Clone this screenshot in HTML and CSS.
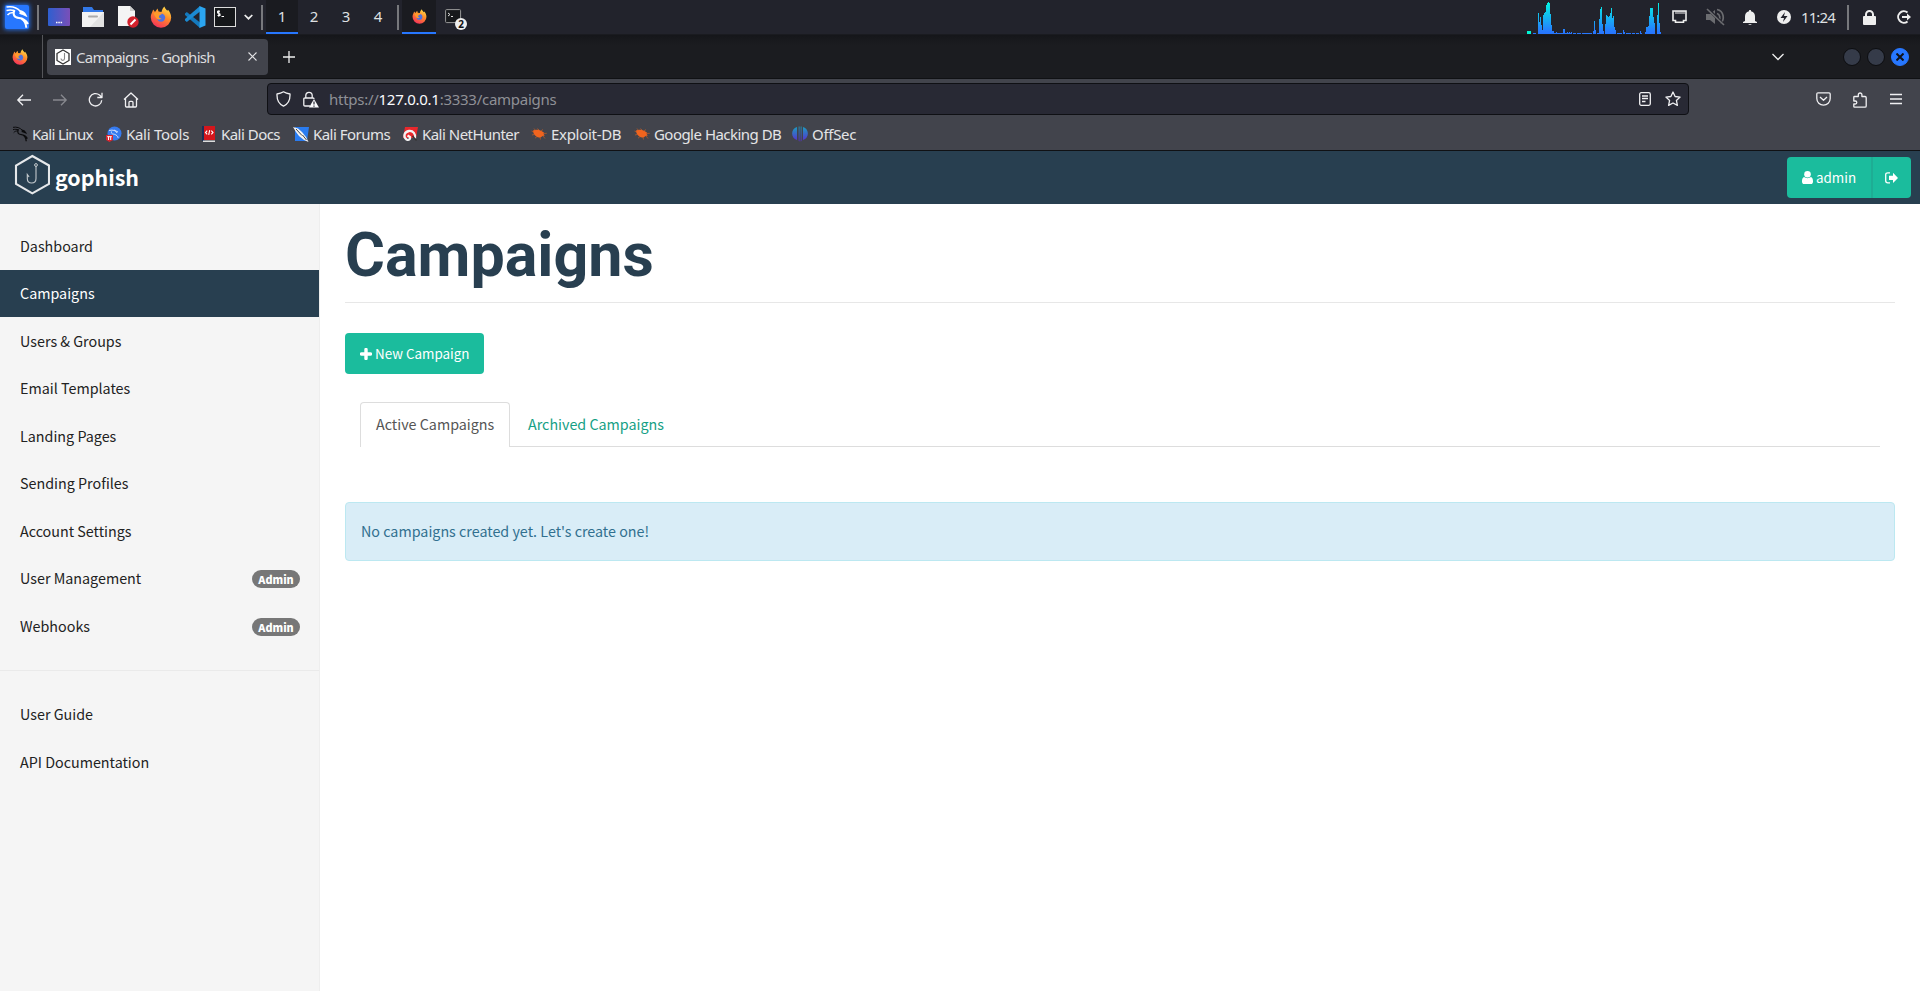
FILE: index.html
```html
<!DOCTYPE html>
<html lang="en">
<head>
<meta charset="utf-8">
<title>Campaigns - Gophish</title>
<link rel="stylesheet" href="styles.css">
</head>
<body>
<svg class="defs" width="0" height="0" aria-hidden="true">
  <defs>
    <linearGradient id="fox" x1="0.8" y1="0" x2="0.3" y2="1"><stop offset="0" stop-color="#ffe14a"/><stop offset=".45" stop-color="#ff8a2a"/><stop offset="1" stop-color="#f5305c"/></linearGradient>
    <linearGradient id="desk" x1="0" y1="0" x2="1" y2="0"><stop offset="0" stop-color="#2e5fd0"/><stop offset="1" stop-color="#7a4fb8"/></linearGradient>
    <linearGradient id="load" x1="0" y1="0" x2="0" y2="32" gradientUnits="userSpaceOnUse"><stop offset="0" stop-color="#00ffe0"/><stop offset="1" stop-color="#2777ff"/></linearGradient>
    <linearGradient id="off" x1="0" y1="0" x2="0" y2="1"><stop offset="0" stop-color="#1a9fc0"/><stop offset="1" stop-color="#5a2bd0"/></linearGradient>
    <symbol id="firefox" viewBox="0 0 22 22">
      <path fill="url(#fox)" d="M2 6.500 3.200 3.500 5 6l2.500-3.500 1 3 3 .5C12 3.500 13 1.800 14.500 .5c.3 2 1.600 2.800 2.800 4.200l.7-1c1.700 2 3.200 4.600 3.200 7.800A10.200 10.200 0 0 1 .8 11.500C.8 9.500 1.200 8 2 6.500z"/>
      <circle cx="11" cy="11.600" r="4.200" fill="#4f72e0"/>
      <path fill="#ff9b2b" d="M3.500 7.500c2-1.500 4-1.500 5.500-.5l3 .3c-.3 1.500-2.500 1.700-3 2.700-.5 1.500.5 2.500 2.500 2.500-2 1.600-5 1-6-1.500z"/>
    </symbol>
    <symbol id="dragon" viewBox="0 0 24 24">
      <path fill="none" stroke="currentColor" stroke-width="1.500" d="M1.500 2C7 1 12 2.500 15.500 6.500M1.500 5.500c3-.8 5.500-.6 8 .2M2.500 10C4.500 7.500 6.500 7.300 9 7.500"/>
      <path fill="none" stroke="currentColor" stroke-width="2" d="M9.500 5C7.500 9.500 9 12.500 14 13c4.500.4 7 2.500 9 6M16.500 13.800c3.800 1.800 4.500 4.800 4.800 9M14.500 6.200c3-.2 4.700 1.300 6 4l-3.500-1.500-2.500-.8"/>
    </symbol>
    <symbol id="bug" viewBox="0 0 16 16">
      <path fill="#f0641e" d="M2 4.500c2.500-1.300 6-1 8.500.5l2.700 1.800-.7 1 1.200 1.800-2.200.3C9.500 12 7 11.800 5.500 10.500 3.500 9.500 2.200 7.500 2 4.500z"/>
      <path stroke="#d8621f" stroke-width=".6" fill="none" d="M3 6 .5 5M4.500 4.500 3 2.500M8 4 6.500 2.500M10 5l2-1.500M13 7.500l2.800-.2M12 10l2 2.500M9 11l.5 2.500M6 10.500l-2 1.700M3 8.500l-2 .5"/>
    </symbol>
  </defs>
</svg>

<header class="panel">
  <div class="panel-left">
    <span class="kali"><svg width="24" height="24"><use href="#dragon"/></svg></span>
    <i class="sep sep-a"></i>
    <svg class="app desk-app" width="22" height="18" viewBox="0 0 22 18"><rect width="22" height="18" rx="1" fill="url(#desk)"/><path stroke="#fff" stroke-width="1.500" d="M8 14.500h1.500M10.300 14.500h1.500M12.600 14.500h1.500"/></svg>
    <svg class="app folder-app" width="22" height="20" viewBox="0 0 22 20"><path fill="#3278e8" d="M1 0h9l2 3h9v4H1z"/><path fill="#f2f2f2" d="M0 5h22v15H0z"/><path fill="#e2e2e2" d="M22 5v15H8z"/><path stroke="#aaa" stroke-width="2" stroke-linecap="round" d="M7 9.500h8"/></svg>
    <svg class="app doc-app" width="21" height="22" viewBox="0 0 21 22"><path fill="#f4f4f4" d="M0 0h12l5 5v15H0z"/><path fill="#ccc" d="M12 0v5h5z"/><circle cx="15" cy="16" r="5.700" fill="#d3212c"/><path stroke="#fff" stroke-width="2" d="m12.500 18.500 5-5"/></svg>
    <svg class="app fox-app" width="22" height="22"><use href="#firefox"/></svg>
    <svg class="app code-app" width="22" height="22" viewBox="0 0 22 22"><path fill="#1479bd" d="M1 7.500 2.800 6 16 16.500V22L1 9z"/><path fill="#1b8ad2" d="M1 14.500 2.800 16 16 5.500V0L1 13z"/><path fill="#2ba5f0" d="m15.500 0 6 2.500v17l-6 2.500z"/></svg>
    <svg class="app term-app" width="22" height="20" viewBox="0 0 22 20"><rect x=".5" y=".5" width="21" height="19" fill="#15171a" stroke="#dcdcdc"/><path fill="none" stroke="#fff" stroke-width="1.100" d="M6 4.300H3.600v1.500L6 7v1.500H3.500M4.800 3.200v6.500M7.500 9.500H10"/></svg>
    <svg class="app arrow-app" width="9" height="6" viewBox="0 0 9 6"><path fill="none" stroke="#eee" stroke-width="1.700" d="m.7 1 3.800 3.700L8.300 1"/></svg>
    <i class="sep sep-b"></i>
    <span class="ws ws-on">1</span><span class="ws">2</span><span class="ws">3</span><span class="ws">4</span>
    <i class="sep sep-c"></i>
    <span class="task"><svg width="15" height="15"><use href="#firefox"/></svg></span>
    <svg class="task-term" width="23" height="22" viewBox="0 0 23 22"><rect x=".6" y=".6" width="15" height="13" rx="1" fill="#17191c" stroke="#999"/><path fill="none" stroke="#ddd" d="m3 4 2 1.500L3 7M6 7.500h2"/><circle cx="16" cy="15" r="6" fill="#eee"/><text x="16" y="18.600" text-anchor="middle" class="count">2</text></svg>
  </div>
  <div class="panel-right">
    <svg class="graph" width="134" height="34" viewBox="0 0 134 34"><path fill="#00f5d4" d="M0 31h4v3H0z"/><path fill="url(#load)" d="M6 33h2v1H6zM9 33V34H8V33zM11 34V13h1v9h1v-5h1v8h1v5h1v-15h1v-2h1v-1h1V5h1V3h1V2h1v1h1v11h1v11h1v6h1v3zM26 31h1v3h-1zM27 33h2v-1h1v1h6v-4h2v4h2v-1h1v1h1v-1h1v1h1v1H27zM44 32h1v2h-1zM46 33h3v1h-3zM50 33h4v1h-4zM55 33h10v1H55zM66 34v-3h1V21h1v9h1v4zM70 33h2V19h1V9h1V7h1v17h1v7h1v3h-7zM78 34V24h1v-9h1v1h1v1h1v-1h1v-3h1v-5h1v10h1v-2h1v11h1v3h1v5zM90 33h5v1h-5zM96 30h1v2h1v2h-2zM99 33h5v1h-5zM105 33h3v1h-3zM109 33h3v1h-3zM113 31h1v2h1v1h-2zM118 34v-2h1v-5h2v-1h1V16h1V8h3v9h1v6h1v11zM130 34V15h1V3h1v20h1v9h1v2z"/></svg>
    <svg class="r-eth" width="15" height="14" viewBox="0 0 15 14"><path fill="none" stroke="#eee" stroke-width="1.600" d="M1 1h13v9.500h-2.500v1.700h-8v-1.700H1z"/><path stroke="#eee" d="M4 1v3M6 1v3M8 1v3M10 1v3M12 1v3"/></svg>
    <svg class="r-vol" width="19" height="18" viewBox="0 0 19 18"><path fill="#6b6c70" d="M0 6h4l5-4v14l-5-4H0z"/><path fill="none" stroke="#6b6c70" stroke-width="1.700" d="M11 1.500c7 1.500 8 10 3.500 14M11 5.500c3 1 3.500 4.500 2 7"/><path stroke="#22232c" stroke-width="3" d="m1 0 18 18"/><path stroke="#6b6c70" stroke-width="1.700" d="m1 1 17 16"/></svg>
    <svg class="r-bell" width="14" height="15" viewBox="0 0 14 15"><path fill="#eee" d="M7 0c1 0 1 .5 1 1.200 3 .7 4 2.800 4 5.300V11l2 1v1H0v-1l2-1V6.500C2 4 3 1.900 6 1.200 6 .5 6 0 7 0zM5 14h4l-2 1z"/></svg>
    <svg class="r-pow" width="14" height="14" viewBox="0 0 14 14"><circle cx="7" cy="7" r="7" fill="#eee"/><path fill="#22232c" d="M8 2 3.500 8H7l-1 4 4.500-6H7z"/></svg>
    <span class="clock">11:24</span>
    <i class="sep sep-d"></i>
    <svg class="r-lock" width="13" height="15" viewBox="0 0 13 15"><rect y="6" width="13" height="9" rx="1" fill="#eee"/><path fill="none" stroke="#eee" stroke-width="2" d="M3 7V4.500a3.500 3.500 0 0 1 7 0V7"/></svg>
    <svg class="r-out" width="14" height="14" viewBox="0 0 14 14"><path fill="none" stroke="#eee" stroke-width="2" d="M10.500 2.600a5.700 5.700 0 1 0 0 8.800"/><path fill="#eee" d="M5 6h5V3.500L14 7l-4 3.500V8H5z"/></svg>
  </div>
</header>

<div class="tabstrip">
  <span class="view"><svg width="16" height="16"><use href="#firefox"/></svg></span>
  <div class="tab">
    <svg width="16" height="16" viewBox="0 0 16 16"><path fill="#fff" d="M0 0h16v16H0z"/><path fill="none" stroke="#333" stroke-width="1.300" d="m8 1 6 3.500v7L8 15l-6-3.500v-7z"/><path fill="none" stroke="#888" stroke-width="1.100" d="M9.500 4v5.500c0 2.500-3.500 2.500-3.500 0"/></svg>
    <span class="tab-title">Campaigns - Gophish</span>
    <svg class="tab-x" width="9" height="9" viewBox="0 0 9 9"><path stroke="#e4e4e6" stroke-width="1.100" d="m.5.5 8 8m0-8-8 8"/></svg>
  </div>
  <svg class="plus" width="12" height="12" viewBox="0 0 12 12"><path stroke="#eee" stroke-width="1.300" d="M6 0v12M0 6h12"/></svg>
  <svg class="all-tabs" width="12" height="8" viewBox="0 0 12 8"><path fill="none" stroke="#eee" stroke-width="1.300" d="m.5 1 5.500 5.500L11.500 1"/></svg>
  <i class="dot"></i><i class="dot"></i>
  <i class="dot dot-x"><svg width="8" height="8" viewBox="0 0 8 8"><path stroke="#101218" stroke-width="2" d="m.5.500 7 7m0-7-7 7"/></svg></i>
</div>

<div class="toolbar">
  <svg class="t-back" width="14" height="12" viewBox="0 0 14 12"><path class="ln" d="M14 6H1M6 .7.8 6 6 11.300"/></svg>
  <svg class="t-fwd" width="14" height="12" viewBox="0 0 14 12"><path class="ln" d="M0 6h13M8 .7 13.200 6 8 11.300"/></svg>
  <svg class="t-load" width="15" height="15" viewBox="0 0 15 15"><path class="ln" d="M13.700 8.200A6.200 6.200 0 1 1 11.500 3l2 2M14 .8v4.700H9.300"/></svg>
  <svg class="t-home" width="16" height="16" viewBox="0 0 16 16"><path class="ln" d="M1 7.500 8 1l7 6.500M2.500 6.500V14c0 .7.300 1 1 1h9c.7 0 1-.3 1-1V6.500M6 15v-4.500c0-1 .3-1.200 1-1.200h2c.7 0 1 .2 1 1.200V15"/></svg>
  <div class="url">
    <svg class="u-shield" width="15" height="16" viewBox="0 0 15 16"><path class="ln" d="M7.500.8c2 1.300 4 1.900 6.500 2.200.3 6-1.500 10-6.500 12.200C2.500 13 .7 9 1 3 3.500 2.700 5.500 2.100 7.500.8z"/></svg>
    <svg class="u-lock" width="16" height="17" viewBox="0 0 16 17"><path class="ln" d="M7 15H2c-.8 0-1.200-.4-1.200-1.200V8.200C.8 7.400 1.200 7 2 7h8c.8 0 1 .4 1 1M2.800 7V4.500a3.200 3.200 0 0 1 6.400 0V7"/><path fill="#fbfbfe" d="m11 8 5 8.500H6z"/><path stroke="#282934" stroke-width="1.200" d="M11 10.500v3M11 14.500v1.200"/></svg>
    <span class="address">https://<b>127.0.0.1</b>:3333/campaigns</span>
    <svg class="u-read" width="12" height="14" viewBox="0 0 12 14"><rect class="ln" x=".7" y=".7" width="10.600" height="12.600" rx="1.500"/><path class="ln" d="M3 4h6M3 6.500h6M3 9.500h3.500"/></svg>
    <svg class="u-star" width="16" height="16" viewBox="0 0 16 16"><path class="ln" d="m8 1 2.100 4.500 5 .6-3.700 3.300 1 5L8 12l-4.400 2.400 1-5L.9 6.100l5-.6z"/></svg>
  </div>
  <svg class="t-pocket" width="15" height="14" viewBox="0 0 15 14"><path class="ln" d="M2 .8h11c.8 0 1.200.4 1.200 1.200v4.500a6.700 6.700 0 0 1-13.400 0V2C.8 1.200 1.200.8 2 .8zM4 5l3.500 3.300L11 5"/></svg>
  <svg class="t-ext" width="14" height="16" viewBox="0 0 14 16"><path class="ln" d="M.8 9V5.200c0-.5.300-.7.700-.7h3.800V2.800a1.800 1.800 0 0 1 3.600 0v1.700H12c.8 0 1.200.4 1.200 1.200V14c0 .8-.4 1.200-1.200 1.200H1.500c-.5 0-.7-.2-.7-.7V12h1.500a1.500 1.500 0 0 0 0-3z"/></svg>
  <svg class="t-menu" width="12" height="12" viewBox="0 0 12 12"><path class="ln" d="M0 1.500h12M0 6h12M0 10.500h12"/></svg>
</div>

<nav class="bookmarks">
  <span class="tight"><svg class="black" width="16" height="16"><use href="#dragon"/></svg><em>Kali Linux</em></span>
  <span class="loose"><svg width="16" height="16" viewBox="0 0 16 16"><circle cx="8.500" cy="7.500" r="7" fill="#367bf0"/><path fill="none" stroke="#dbe8ff" stroke-width=".9" d="M3 4.500c4-1 7 0 8 2.500M5.500 5.500C5 9 8 7.500 10 9s2 2 2 3M8 4l4 2"/><path fill="#d9262f" d="M0 9h7v5l-3.500 2L0 14z"/><path stroke="#fff" stroke-width="1" d="M1.300 10.700h4.500M2.500 10.700V14M4.700 10.700V14"/></svg><em>Kali Tools</em></span>
  <span><svg width="16" height="16" viewBox="0 0 16 16"><path fill="#1c2f58" d="M1 0h3v15H1z"/><path fill="#d4161c" d="M3 0h11v14H3z"/><path fill="#ddd" d="M2 14.500h12V16H2z"/><path fill="none" stroke="#fff" stroke-width="1.100" d="M6.200 4.700 4.500 6.500l1.700 1.800M10.300 4.700 12 6.500l-1.700 1.800M8.700 4.200l-1 4.600"/></svg><em>Kali Docs</em></span>
  <span><svg width="16" height="16" viewBox="0 0 16 16"><path fill="#2a7cf0" d="M2 1h14l-2 14H2z"/><path fill="#f2f2f2" d="m0 1 5 1.500 4 3.500 4 5 2.500 5-4.500-2-5-4-3-4z"/><path stroke="#333" stroke-width=".9" d="m3 3 6 6.500M9.500 9l4 5"/></svg><em>Kali Forums</em></span>
  <span><svg width="16" height="16" viewBox="0 0 16 16"><path fill="#e8282c" d="M3 1h13l-2 11H1z"/><path fill="none" stroke="#f3f3f3" stroke-width="2.300" d="M13 12.500C14 8 11 4.500 7 5 2 5.700 1 11 4.500 13.500c2.500 1.200 4-.5 3.500-2.500L5.500 9.500"/><path stroke="#333" stroke-width="1.300" d="m10.500 10 4 4.500"/></svg><em>Kali NetHunter</em></span>
  <span class="loose"><svg width="16" height="16"><use href="#bug"/></svg><em>Exploit-DB</em></span>
  <span><svg width="16" height="16"><use href="#bug"/></svg><em>Google Hacking DB</em></span>
  <span class="loose"><svg width="16" height="16" viewBox="0 0 16 16"><path fill="url(#off)" d="M5 1v13C-1.500 12-1.500 3 5 1zM6.700.5H7.500v15l-.8-.5zM8.700.5h.8V15l-.8.5zM11 1c6.500 2 6.500 11 0 13z"/></svg><em>OffSec</em></span>
</nav>

<div class="navbar">
  <div class="brand">
    <svg width="36" height="41" viewBox="0 0 36 41"><path fill="none" stroke="#e6e8ea" stroke-width="2.100" d="m18.300 2 16.700 9.500v18.300l-16.700 9.500L2 29.800V11.500z"/><path fill="none" stroke="#c3c9cd" stroke-width="1.100" d="M22 12v12.500c0 6-8.700 6-8.700 0v-4l1.800 2.500"/><circle cx="22" cy="11" r="1.400" fill="none" stroke="#c3c9cd"/></svg>
    <span>gophish</span>
  </div>
  <div class="user">
    <button class="who"><svg width="11" height="13" viewBox="0 0 11 13"><circle cx="5.500" cy="3.300" r="3.300" fill="#fff"/><path fill="#fff" d="M2 6c2 1.500 5 1.500 7 0 1.700.5 2 2.500 2 4.500S10 13 9 13H2c-1 0-2-.5-2-2.500S.300 6.500 2 6z"/></svg><span>admin</span></button>
    <button class="leave"><svg width="13" height="12" viewBox="0 0 13 12"><path fill="none" stroke="#fff" stroke-width="1.300" d="M5 .8H2.800C1.500.8.7 1.500.7 2.800v6c0 1.300.8 2 2.100 2H5"/><path fill="#fff" d="M4 3.800h4V.8L13 6l-5 5V8H4z"/></svg></button>
  </div>
</div>

<div class="page">
  <aside class="sidebar">
    <a>Dashboard</a>
    <a class="on">Campaigns</a>
    <a>Users &amp; Groups</a>
    <a>Email Templates</a>
    <a>Landing Pages</a>
    <a>Sending Profiles</a>
    <a>Account Settings</a>
    <a>User Management<span class="badge">Admin</span></a>
    <a>Webhooks<span class="badge">Admin</span></a>
    <hr>
    <a>User Guide</a>
    <a>API Documentation</a>
  </aside>
  <main class="main">
    <h1>Campaigns</h1>
    <button class="new"><svg width="12" height="12" viewBox="0 0 12 12"><path stroke="#fff" stroke-width="3.400" stroke-linecap="round" d="M6 1.500v9M1.500 6h9"/></svg><span>New Campaign</span></button>
    <div class="tabs"><a class="current">Active Campaigns</a><a>Archived Campaigns</a></div>
    <div class="alert">No campaigns created yet. Let's create one!</div>
  </main>
</div>
</body>
</html>
```
FILE: styles.css
```css
* { box-sizing: border-box; }
body {
  margin: 0;
  height: 991px;
  overflow: hidden;
  display: flex;
  flex-direction: column;
  background: #fff;
  font-family: "Noto Sans CJK SC", sans-serif;
}
svg { display: block; flex: none; }
.defs { position: absolute; }
button { border: 0; font: inherit; color: inherit; }

/* desktop panel */
.panel {
  height: 35px;
  flex: none;
  display: flex;
  justify-content: space-between;
  background: #22232c;
  border-bottom: 1px solid #1a1b20;
  font-family: "Noto Sans", sans-serif;
  font-size: 15px;
  color: #dfe0e2;
}
.panel-left, .panel-right { display: flex; align-items: center; }
.kali {
  width: 24px; height: 24px;
  margin-left: 5px;
  background: #2777ff;
  color: #fff;
  border-radius: 2px;
  box-shadow: 0 0 4px 1px #2469d8;
}
.sep { width: 2px; height: 25px; background: #77787c; }
.sep-a { margin-left: 8px; }
.desk-app { margin-left: 9px; }
.folder-app { margin-left: 12px; }
.doc-app { margin-left: 14px; }
.fox-app { margin-left: 11px; }
.code-app { margin-left: 12px; }
.term-app { margin-left: 8px; }
.arrow-app { margin-left: 8px; }
.sep-b { margin-left: 8px; }
.ws { width: 32px; height: 34px; line-height: 33px; text-align: center; }
.ws-on { background: #1a1b20; border-bottom: 2px solid #2777ff; }
.sep-b + .ws { margin-left: 3px; }
.sep-c { margin-left: 3px; }
.task {
  width: 34px; height: 34px;
  margin-left: 3px;
  display: flex; align-items: center; justify-content: center;
  background: #1a1b20;
  border-bottom: 2px solid #2777ff;
}
.task-term { margin: 6px 0 0 9px; }
.count { font: bold 10px "Noto Sans", sans-serif; fill: #111; }
.graph { align-self: flex-start; margin-right: 11px; }
.r-eth { margin-right: 19px; }
.r-vol { margin-right: 18px; }
.r-bell { margin-right: 20px; }
.r-pow { margin-right: 10px; }
.clock { width: 46px; font-size: 15px; line-height: 20px; padding-bottom: 1px; letter-spacing: -.9px; }
.r-lock { margin: 0 21px 0 14px; }
.r-out { margin-right: 9px; }

/* browser chrome */
.tabstrip {
  height: 44px;
  flex: none;
  display: flex;
  align-items: center;
  background: linear-gradient(#15161a, #1b1c20 10px);
  border-bottom: 1px solid #101114;
  font-family: "Noto Sans", sans-serif;
}
.view { width: 43px; height: 43px; padding: 14px 0 0 12px; border-right: 1px solid #55565a; }
.tab {
  width: 221px; height: 36px;
  margin-left: 4px;
  padding: 0 11px 0 8px;
  display: flex; align-items: center;
  background: #42444c;
  border-radius: 4px;
}
.tab-title { margin-left: 5px; font-size: 15px; letter-spacing: -.75px; word-spacing: 1.2px; color: #dcdcde; white-space: nowrap; }
.tab-x { margin-left: auto; }
.plus { margin-left: 15px; }
.all-tabs { margin-left: auto; margin-right: 59px; }
.dot { width: 18px; height: 18px; margin-right: 6px; border-radius: 50%; background: #353b49; border: 1px solid #0c0d10; }
.dot-x { margin-right: 11px; display: flex; align-items: center; justify-content: center; background: #2777ff; border-color: #2777ff; }
.toolbar {
  height: 41px;
  flex: none;
  display: flex;
  align-items: center;
  background: #42444c;
}
.ln { fill: none; stroke: #f0f0f2; stroke-width: 1.3; stroke-linejoin: round; }
.t-back { margin-left: 17px; }
.t-fwd { margin-left: 22px; opacity: .4; }
.t-load { margin-left: 21px; }
.t-home { margin-left: 20px; }
.url {
  width: 1422px; height: 32px;
  margin: 0 0 1px 128px;
  display: flex; align-items: center;
  background: #282934;
  border: 1px solid #0f1014;
  border-radius: 4px;
}
.u-shield { margin-left: 7.5px; }
.u-lock { margin-left: 12.5px; }
.address { margin-left: 10px; font: 15px "Noto Sans", sans-serif; letter-spacing: -.27px; color: #8f9096; }
.address b { font-weight: 400; color: #fbfbfe; }
.u-read { margin-left: auto; }
.u-star { margin: 0 7px 0 14px; }
.t-pocket { margin: 0 0 1px 127px; }
.t-ext { margin-left: 22px; }
.t-menu { margin: 0 0 2px 23px; }
.bookmarks {
  height: 31px;
  flex: none;
  display: grid;
  grid-template-columns: 94px 95px 92px 109px 129px 103px 158px 80px;
  padding: 0 0 2px 12px;
  align-items: center;
  background: #42444c;
  border-bottom: 1px solid #101114;
  font: 15px/20px "Noto Sans", sans-serif;
  letter-spacing: -.55px;
  word-spacing: .2px;
  color: #e4e4e6;
}
.bookmarks span { display: flex; align-items: center; gap: 4px; white-space: nowrap; }
.bookmarks em { font-style: normal; }
.bookmarks .tight { letter-spacing: -.7px; }
.bookmarks .loose { letter-spacing: -.3px; }
.black { color: #0b0b0d; }
.black, .kali svg { overflow: hidden; }

/* application header */
.navbar {
  height: 53px;
  flex: none;
  display: flex;
  justify-content: space-between;
  background: #283f50;
  color: #fff;
}
.brand { display: flex; padding: 3px 0 0 14px; }
.brand span { margin-left: 5px; padding-top: 5px; font-size: 21.4px; font-weight: 700; line-height: 35px; }
.user { display: flex; height: 41px; margin: 6px 9px 0 0; border-radius: 4px; overflow: hidden; font-size: 13.4px; }
.user button { display: flex; align-items: center; background: #1bbc9d; }
.user span { padding-bottom: 1px; }
.who { width: 86px; padding: 0 0 0 15px; gap: 3px; border-right: 2px solid #1ead94; }
.leave { width: 38px; padding: 0 0 0 12px; }

/* application body */
.page { flex: 1; display: flex; min-height: 0; }
.sidebar {
  width: 320px;
  flex: none;
  padding-top: 19px;
  background: #f5f5f5;
  border-right: 1px solid #eee;
  font-size: 14.32px;
  color: #222;
}
.sidebar a { height: 47.5px; padding: 0 19px 3px 20px; display: flex; align-items: center; justify-content: space-between; }
.sidebar .on { height: 47px; margin: -.5px 0 1px; padding-bottom: 2px; background: #283f50; color: #fff; }
.sidebar hr { margin: 19px 0 21px; border: 0; border-top: 1px solid #eaeaea; }
.badge { width: 48px; height: 18px; margin-top: 3px; border-radius: 9px; background: #777; color: #fff; font-size: 10.8px; font-weight: 900; line-height: 18px; text-align: center; }
.main { flex: 1; padding: 0 25px; }
h1 {
  height: 99px;
  margin: 0 0 30px;
  padding-top: 15px;
  border-bottom: 1px solid #e7e7e7;
  font: 700 61px/72px Roboto, sans-serif;
  color: #283f50;
}
.new { width: 139px; height: 41px; padding: 0 0 0 15px; display: flex; align-items: center; gap: 3px; background: #1bbc9d; color: #fff; border-radius: 4px; font-size: 13.4px; white-space: nowrap; }
.new span { padding-bottom: 1px; }
.tabs { display: flex; height: 45px; margin: 28px 15px 0; border-bottom: 1px solid #ddd; font-size: 14.32px; color: #16a085; }
.tabs a { height: 45px; padding: 0 18px; line-height: 43px; }
.tabs .current { width: 150px; padding: 0 0 0 15px; line-height: 41px; background: #fff; border: 1px solid #ddd; border-bottom: 0; border-radius: 4px 4px 0 0; color: #555; }
.alert { height: 59px; margin-top: 55px; padding-left: 15px; line-height: 55px; background: #d9edf7; border: 1px solid #bce8f1; border-radius: 4px; color: #31708f; font-size: 14.32px; }
```
